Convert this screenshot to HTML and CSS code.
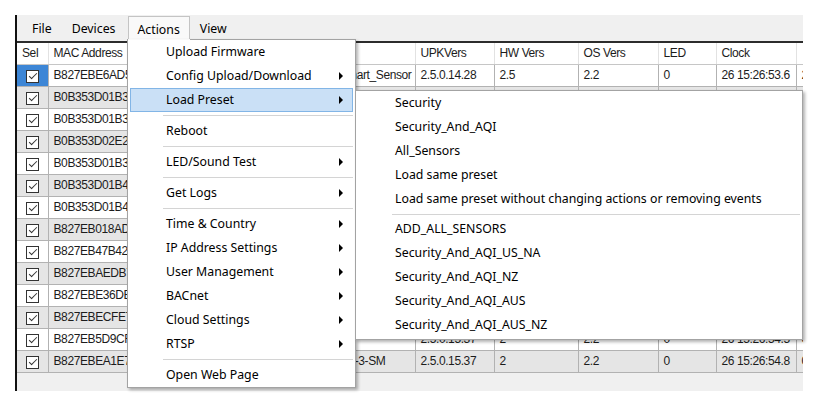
FILE: index.html
```html
<!DOCTYPE html>
<html lang="en">
<head>
    <meta charset="UTF-8">
    <title>Device Manager - Actions</title>
    <link rel="stylesheet" href="styles.css">
</head>
<body>
<div class="screen">
    <div class="window">
        <div class="menubar">
            <span class="menu-item">File</span>
            <span class="menu-item">Devices</span>
            <span class="menu-item open">Actions</span>
            <span class="menu-item">View</span>
        </div>
        <div class="grid">
            <table>
                <colgroup>
                    <col style="width:31px"><col style="width:92px"><col style="width:100px">
                    <col style="width:94px"><col style="width:81px"><col style="width:79px">
                    <col style="width:84px"><col style="width:80px"><col style="width:58px">
                    <col style="width:80px"><col style="width:40px">
                </colgroup>
                <thead>
                    <tr>
                        <th>Sel</th><th>MAC Address</th><th>IP Address</th><th>Name</th><th></th>
                        <th>UPKVers</th><th>HW Vers</th><th>OS Vers</th><th>LED</th><th>Clock</th><th></th>
                    </tr>
                </thead>
                <tbody>
                    <tr><td class="sel selected"><span class="check"></span></td><td>B827EBE6AD5C</td><td>192.168.1.20</td><td>Lobby</td><td>Smart_Sensor</td><td>2.5.0.14.28</td><td>2.5</td><td>2.2</td><td>0</td><td>26 15:26:53.6</td><td>2</td></tr>
                    <tr><td class="sel"><span class="check"></span></td><td>B0B353D01B3A</td><td>192.168.1.21</td><td>Room 101</td><td>PB-3-SM</td><td>2.5.0.15.37</td><td>2</td><td>2.2</td><td>0</td><td>26 15:26:53.7</td><td>0</td></tr>
                    <tr><td class="sel"><span class="check"></span></td><td>B0B353D01B3F</td><td>192.168.1.22</td><td>Room 102</td><td>PB-3-SM</td><td>2.5.0.15.37</td><td>2</td><td>2.2</td><td>0</td><td>26 15:26:53.7</td><td>0</td></tr>
                    <tr><td class="sel"><span class="check"></span></td><td>B0B353D02E2B</td><td>192.168.1.23</td><td>Room 103</td><td>PB-3-SM</td><td>2.5.0.15.37</td><td>2</td><td>2.2</td><td>0</td><td>26 15:26:53.8</td><td>0</td></tr>
                    <tr><td class="sel"><span class="check"></span></td><td>B0B353D01B3C</td><td>192.168.1.24</td><td>Room 104</td><td>PB-3-SM</td><td>2.5.0.15.37</td><td>2</td><td>2.2</td><td>0</td><td>26 15:26:53.9</td><td>0</td></tr>
                    <tr><td class="sel"><span class="check"></span></td><td>B0B353D01B4A</td><td>192.168.1.25</td><td>Room 105</td><td>PB-3-SM</td><td>2.5.0.15.37</td><td>2</td><td>2.2</td><td>0</td><td>26 15:26:54.0</td><td>0</td></tr>
                    <tr><td class="sel"><span class="check"></span></td><td>B0B353D01B4E</td><td>192.168.1.26</td><td>Room 106</td><td>PB-3-SM</td><td>2.5.0.15.37</td><td>2</td><td>2.2</td><td>0</td><td>26 15:26:54.1</td><td>0</td></tr>
                    <tr><td class="sel"><span class="check"></span></td><td>B827EB018AD2</td><td>192.168.1.27</td><td>Hall A</td><td>Smart_Sensor</td><td>2.5.0.14.28</td><td>2.5</td><td>2.2</td><td>0</td><td>26 15:26:54.1</td><td>2</td></tr>
                    <tr><td class="sel"><span class="check"></span></td><td>B827EB47B42F</td><td>192.168.1.28</td><td>Hall B</td><td>Smart_Sensor</td><td>2.5.0.14.28</td><td>2.5</td><td>2.2</td><td>0</td><td>26 15:26:54.2</td><td>2</td></tr>
                    <tr><td class="sel"><span class="check"></span></td><td>B827EBAEDB71</td><td>192.168.1.29</td><td>Office 1</td><td>Smart_Sensor</td><td>2.5.0.14.28</td><td>2.5</td><td>2.2</td><td>0</td><td>26 15:26:54.3</td><td>2</td></tr>
                    <tr><td class="sel"><span class="check"></span></td><td>B827EBE36DE0</td><td>192.168.1.30</td><td>Office 2</td><td>Smart_Sensor</td><td>2.5.0.14.28</td><td>2.5</td><td>2.2</td><td>0</td><td>26 15:26:54.4</td><td>2</td></tr>
                    <tr><td class="sel"><span class="check"></span></td><td>B827EBECFE72</td><td>192.168.1.31</td><td>Office 3</td><td>Smart_Sensor</td><td>2.5.0.14.28</td><td>2.5</td><td>2.2</td><td>0</td><td>26 15:26:54.4</td><td>2</td></tr>
                    <tr><td class="sel"><span class="check"></span></td><td>B827EB5D9CF1</td><td>192.168.1.32</td><td>Storage</td><td></td><td>2.5.0.15.37</td><td>2</td><td>2.2</td><td>0</td><td>26 15:26:54.5</td><td>0</td></tr>
                    <tr><td class="sel"><span class="check"></span></td><td>B827EBEA1E75</td><td>192.168.1.33</td><td>Garage</td><td>PB-3-SM</td><td>2.5.0.15.37</td><td>2</td><td>2.2</td><td>0</td><td>26 15:26:54.8</td><td>0</td></tr>
                </tbody>
            </table>
        </div>
    </div>

    <!-- Actions dropdown -->
    <div class="dropdown actions-menu">
        <div class="item">Upload Firmware</div>
        <div class="item sub">Config Upload/Download</div>
        <div class="item sub hover">Load Preset</div>
        <div class="separator"></div>
        <div class="item">Reboot</div>
        <div class="separator"></div>
        <div class="item sub">LED/Sound Test</div>
        <div class="separator"></div>
        <div class="item sub">Get Logs</div>
        <div class="separator"></div>
        <div class="item sub">Time &amp; Country</div>
        <div class="item sub">IP Address Settings</div>
        <div class="item sub">User Management</div>
        <div class="item sub">BACnet</div>
        <div class="item sub">Cloud Settings</div>
        <div class="item sub">RTSP</div>
        <div class="separator"></div>
        <div class="item">Open Web Page</div>
    </div>

    <!-- Load Preset submenu -->
    <div class="dropdown preset-menu">
        <div class="item">Security</div>
        <div class="item">Security_And_AQI</div>
        <div class="item">All_Sensors</div>
        <div class="item">Load same preset</div>
        <div class="item">Load same preset without changing actions or removing events</div>
        <div class="separator"></div>
        <div class="item">ADD_ALL_SENSORS</div>
        <div class="item">Security_And_AQI_US_NA</div>
        <div class="item">Security_And_AQI_NZ</div>
        <div class="item">Security_And_AQI_AUS</div>
        <div class="item">Security_And_AQI_AUS_NZ</div>
    </div>
</div>
</body>
</html>
```

FILE: styles.css
```css
* {
    box-sizing: border-box;
}
body {
    margin: 0;
    background-color: #fff;
    font-family: 'Liberation Sans', Arial, sans-serif;
}
.screen {
    position: relative;
    width: 829px;
    height: 407px;
    overflow: hidden;
}
.window {
    margin: 15px 0 0 15px;
    width: 788px;
    height: 376px;
    border-left: 2px solid #111;
    background-color: #f0f0f0;
    display: flex;
    flex-direction: column;
}
.menubar {
    height: 26px;
    padding: 1px 0 0 5px;
    display: flex;
    font-family: 'Noto Sans', 'Open Sans', sans-serif;
    font-size: 12.3px;
    color: #000;
}
.menu-item {
    display: flex;
    align-items: center;
    padding: 0 10px;
}
.menu-item.open {
    margin-left: 2px;
    background-color: #f9f9f9;
    border: 1px solid #c4c4c4;
    border-bottom: 0;
    padding: 0 9px;
}
.grid {
    border-top: 2px solid #2c2c2c;
    overflow: hidden;
}
table {
    border-collapse: collapse;
    table-layout: fixed;
    width: 819px;
    font-size: 12px;
    letter-spacing: -0.4px;
    color: #1c1c1c;
}
th, td {
    padding: 0 5px;
    white-space: nowrap;
    overflow: hidden;
    text-align: left;
    font-weight: normal;
}
th {
    height: 21px;
    background-color: #fff;
    border-right: 1px solid #e2e2e2;
    border-bottom: 1px solid #c6c6c6;
}
td {
    height: 22px;
    border-right: 1px solid #b2b2b2;
    border-bottom: 1px solid #b2b2b2;
}
tbody tr:nth-child(odd) td {
    background-color: #fff;
}
tbody tr:nth-child(even) td {
    background-color: #e5e5e5;
}
td.sel {
    padding: 0;
    text-align: center;
}
tbody tr td.selected {
    background-color: #3d86d6;
}
.check {
    display: inline-block;
    position: relative;
    width: 13px;
    height: 13px;
    margin-top: 2px;
    border: 1px solid #333;
    background-color: #fff;
    vertical-align: middle;
}
.check::after {
    content: "";
    position: absolute;
    left: 2px;
    top: 2px;
    width: 7px;
    height: 3px;
    border-left: 1px solid #333;
    border-bottom: 1px solid #333;
    transform: rotate(-45deg);
}

/* dropdown menus */
.dropdown {
    position: absolute;
    background-color: #fff;
    border: 1px solid #a3a3a3;
    box-shadow: 2px 2px 3px rgba(0, 0, 0, 0.3);
    font-family: 'Noto Sans', 'Open Sans', sans-serif;
    font-size: 12.3px;
    color: #000;
}
.actions-menu {
    left: 127px;
    top: 39px;
    width: 229px;
}
.actions-menu::before {
    content: "";
    position: absolute;
    left: 0;
    top: -1px;
    width: 62px;
    height: 1px;
    background-color: #f9f9f9;
}
.preset-menu {
    left: 355px;
    top: 90px;
    width: 448px;
    padding-bottom: 2px;
}
.item {
    position: relative;
    height: 24px;
    line-height: 24px;
    padding-left: 38px;
    white-space: nowrap;
}
.preset-menu .item {
    padding-left: 39px;
}
.item.sub::after {
    content: "";
    position: absolute;
    right: 12px;
    top: 8px;
    border-left: 4px solid #000;
    border-top: 4px solid transparent;
    border-bottom: 4px solid transparent;
}
.item.hover {
    margin: 0 2px;
    padding-left: 35px;
    background-color: #cae0f6;
    border: 1px solid #82b5e6;
    line-height: 22px;
}
.item.hover::after {
    right: 9px;
    top: 7px;
}
.separator {
    position: relative;
    height: 7px;
    margin: 0 2px 0 35px;
}
.preset-menu .separator {
    height: 6px;
    margin-left: 36px;
}
.separator::before {
    content: "";
    position: absolute;
    left: 0;
    right: 0;
    top: 3px;
    height: 1px;
    background-color: #d4d4d4;
}
```
